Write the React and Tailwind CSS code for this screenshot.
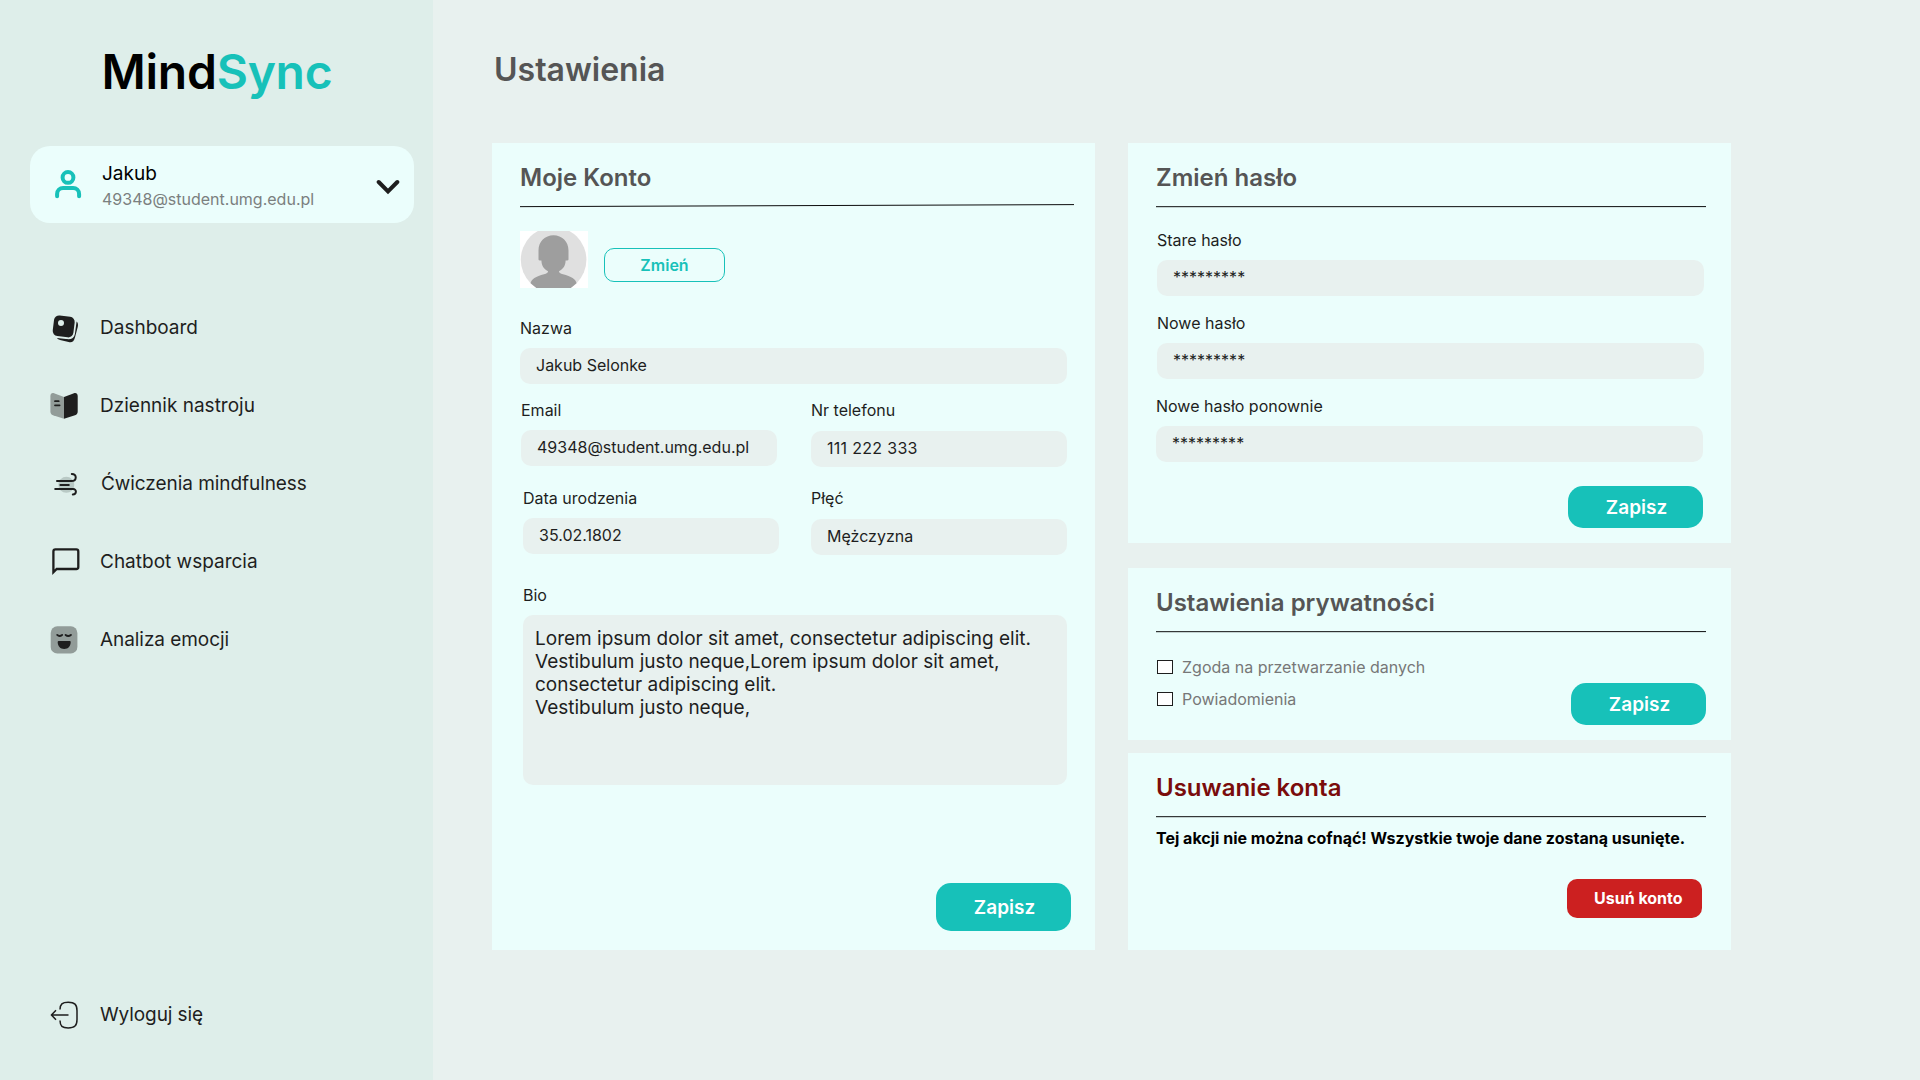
const INK = "#1e1e1e";
const MUTED = "#929c99";

function DashboardIcon() {
  return (
    <svg className="block h-[30px] w-[32px]" viewBox="50 313 32 30" fill={INK}>
      <path d="M76.6 320.6C78 321.8 78.3 323.8 77.8 325.7L74.9 336.8C73.9 340.7 71.8 341.9 68.6 341.1L60 338.9C58.6 338.5 57.7 338.1 57 337L66 338.1C71.4 338.8 74.2 337 74.9 333Z" />
      <rect x="53.3" y="315" width="20.8" height="20.8" rx="5.2" transform="rotate(7 63.7 325.4)" />
      <circle cx="61" cy="322" r="3" fill="#deeeea" />
    </svg>
  );
}

function JournalIcon() {
  return (
    <svg className="block h-[28px] w-[32px]" viewBox="50 392 32 28">
      <path fill={MUTED} d="M64 396.9L54 393.3C52 392.6 50.4 393.8 50.4 396V411.5C50.4 413.5 51.2 414.6 53 415.2L64 418.7Z" />
      <path fill={INK} d="M64 396.9L74 393.3C76 392.6 77.7 393.8 77.7 396V411.5C77.7 413.5 76.9 414.6 75 415.2L64 418.7Z" />
      <path d="M55 401.2H58.7M55 405.3H59.6" stroke={INK} strokeWidth="1.8" strokeLinecap="round" />
    </svg>
  );
}

function WindIcon() {
  return (
    <svg className="block h-[26px] w-[32px]" viewBox="50 470 32 26" fill="none">
      <circle cx="66.3" cy="483.8" r="8" fill="#b9c9c5" />
      <path
        d="M57 480H71.5C77 480 77.2 472.9 71.8 472.9M60.4 484H68.8M55.2 488.1H73C77 488.1 76.8 493.4 72.8 493.4"
        stroke={INK}
        strokeWidth="2"
        strokeLinecap="round"
      />
    </svg>
  );
}

function ChatIcon() {
  return (
    <svg className="block h-[30px] w-[32px]" viewBox="50 547 32 30" fill="none">
      <path
        d="M53.4 572.3V551.4A2 2 0 0 1 55.4 549.4H76.3A2 2 0 0 1 78.3 551.4V567A2 2 0 0 1 76.3 569H56.7Z"
        stroke={INK}
        strokeWidth="2.3"
      />
    </svg>
  );
}

function EmotionIcon() {
  return (
    <svg className="block h-[30px] w-[32px]" viewBox="50 625 32 30" fill="none">
      <rect x="50.7" y="626.3" width="26.7" height="27.2" rx="6.6" fill={MUTED} />
      <path d="M57.2 634.9Q59.4 637 62.1 634.9M65.6 634.9Q68.2 637 70.9 634.9" stroke={INK} strokeWidth="1.9" strokeLinecap="round" />
      <path d="M58.6 641H69.8Q70.7 641 70.7 642C70.7 646.2 68.2 649 64.2 649S57.7 646.2 57.7 642Q57.7 641 58.6 641Z" fill={INK} />
    </svg>
  );
}

function LogoutIcon() {
  return (
    <svg className="block h-[30px] w-[32px]" viewBox="50 1000 32 30" fill="none">
      <path
        d="M60 1009.6C60.1 1004 62.2 1002.3 68.2 1002.3C74.6 1002.3 77 1004.4 77 1010.8V1019.4C77 1025.8 74.6 1027.9 68.2 1027.9C62.2 1027.9 60.1 1026.2 60 1020.6M68.5 1015H51.8M56 1010.3L51.4 1015L56 1019.7"
        stroke={INK}
        strokeWidth="1.5"
        strokeLinejoin="round"
      />
    </svg>
  );
}

function UserIcon() {
  return (
    <svg className="block h-[30px] w-[28px]" viewBox="54 169 28 30" fill="none" stroke="#17c1b9">
      <circle cx="68" cy="177.4" r="5.4" strokeWidth="4" />
      <path d="M57.1 196.2V194A6 6 0 0 1 63.1 188H73.1A6 6 0 0 1 79.1 194V196.2" strokeWidth="4" strokeLinecap="round" />
    </svg>
  );
}

function Avatar() {
  return (
    <svg className="block h-[57px] w-[68px]" viewBox="0 0 68 57">
      <rect width="68" height="57" fill="#fff" />
      <circle cx="33.6" cy="28.8" r="32.8" fill="#e0e0e0" />
      <path
        fill="#9e9e9e"
        d="M33.5 4.2C42 4.2 48.5 10.5 48.5 19.5V28.5Q48.5 29.6 47 29.6H45.6C45.4 35 43.5 37.8 39 40.2Q38.6 42.2 43 43.2C51 45 56.2 48.5 56.5 52.2L50.8 57H16.4L10.6 52.2C11 48.5 16 45 24 43.2Q28.4 42.2 28 40.2C23.5 37.8 21.7 35 21.4 29.6H20Q18.5 29.6 18.5 28.5V19.5C18.5 10.5 25 4.2 33.5 4.2Z"
      />
    </svg>
  );
}

function Rule({ width, from, to, className }) {
  return (
    <svg className={`block h-[6px] ${className}`} viewBox={`0 0 ${width} 6`}>
      <line x1="0" y1={from} x2={width} y2={to} stroke="#0c0c0c" strokeWidth="1" />
    </svg>
  );
}

function Heading({ children, className = "text-[#555555]" }) {
  return <h2 className={`text-[24px] leading-[29px] font-semibold ${className}`}>{children}</h2>;
}

function Field({ label, value, className = "" }) {
  return (
    <div className={`flex flex-col text-[16px] leading-[20px] text-[#1e1e1e] ${className}`}>
      <label>{label}</label>
      <div className="mt-[10px] h-[36px] rounded-[10px] bg-[#e8f1ef] px-4 pt-[7px]">{value}</div>
    </div>
  );
}

function SaveButton({ className }) {
  return (
    <button className={`block w-[135px] rounded-[15px] bg-[#17c1b9] pl-[2px] text-center text-[19px] leading-[23px] font-semibold text-white ${className}`}>
      Zapisz
    </button>
  );
}

function Checkbox({ label }) {
  return (
    <label className="flex h-[20px] items-center text-[16px] leading-[20px] text-[#777777]">
      <span className="ml-px h-[14px] w-[16px] border border-[#1e1e1e] bg-white" />
      <span className="ml-[9px]">{label}</span>
    </label>
  );
}

const navItems = [
  { label: "Dashboard", Icon: DashboardIcon, shift: "pt-[2px]" },
  { label: "Dziennik nastroju", Icon: JournalIcon, shift: "pt-px" },
  { label: "Ćwiczenia mindfulness", Icon: WindIcon, text: "pl-px tracking-[-0.06px]" },
  { label: "Chatbot wsparcia", Icon: ChatIcon, shift: "pt-px" },
  { label: "Analiza emocji", Icon: EmotionIcon, shift: "pt-px", text: "tracking-[-0.06px]" },
];

function NavRow({ label, Icon, shift = "", text = "" }) {
  return (
    <a className="flex h-[23px] items-center text-[19px] leading-[23px] text-[#1e1e1e]">
      <span className={`w-[50px] ${shift}`}>
        <Icon />
      </span>
      <span className={text}>{label}</span>
    </a>
  );
}

export default function App() {
  return (
    <div className="flex h-[1080px] w-[1920px] overflow-hidden bg-[#e8f1ef] font-['Inter',sans-serif]">
      <aside className="flex w-[433px] flex-col bg-[#deeeea] pt-[42px] pb-[54px]">
        <div className="ml-[101.5px] text-[48px] leading-[59px] font-semibold tracking-[-0.25px] text-black">
          Mind<span className="text-[#17c1b9]">Sync</span>
        </div>
        <div className="mt-[45px] ml-[30px] flex h-[77px] w-[384px] rounded-[20px] bg-[#ebfefc] pl-6">
          <div className="pt-[23px]">
            <UserIcon />
          </div>
          <div className="ml-5 pt-4">
            <div className="text-[19px] leading-[23px] text-black">Jakub</div>
            <div className="mt-1 text-[16px] leading-[20px] text-[#7b807f]">49348@student.umg.edu.pl</div>
          </div>
          <svg className="mt-[33px] mr-[14px] ml-auto block h-[16px] w-[24px]" viewBox="376 179 24 16" fill="none">
            <path d="M378.7 182L388 191.4L397.3 182" stroke={INK} strokeWidth="4" strokeLinecap="round" />
          </svg>
        </div>
        <nav className="mt-[93px] ml-[50px] flex flex-col gap-[55px]">
          {navItems.map((item) => (
            <NavRow key={item.label} {...item} />
          ))}
        </nav>
        <div className="mt-auto ml-[50px]">
          <NavRow label="Wyloguj się" Icon={LogoutIcon} shift="pt-px" text="tracking-[-0.1px]" />
        </div>
      </aside>

      <main className="pt-[50px] pl-[59px]">
        <h1 className="ml-[2px] text-[32px] leading-[39px] font-semibold text-[#555555]">Ustawienia</h1>
        <div className="mt-[54px] flex gap-[33px]">
          <section className="h-[807px] w-[603px] bg-[#ebfefc] pt-5 pl-7">
            <Heading>Moje Konto</Heading>
            <Rule width={554} from={3.65} to={1.6} className="mt-[11px] w-[554px]" />
            <div className="mt-[22px] flex">
              <Avatar />
              <button className="mt-[17px] ml-4 h-[34px] w-[121px] rounded-[10px] border border-[#17c1b9] text-center text-[16px] leading-[20px] font-semibold text-[#17c1b9]">
                Zmień
              </button>
            </div>
            <Field label="Nazwa" value="Jakub Selonke" className="mt-[30px] w-[547px]" />
            <div className="flex w-[547px] justify-between">
              <div>
                <Field label="Email" value="49348@student.umg.edu.pl" className="mt-4 ml-px w-[256px]" />
                <Field label="Data urodzenia" value="35.02.1802" className="mt-[22px] ml-[3px] w-[256px]" />
              </div>
              <div>
                <Field
                  label="Nr telefonu"
                  value={<span className="tracking-[0.3px]">111 222 333</span>}
                  className="mt-4 w-[256px] [&>div]:mt-[11px]"
                />
                <Field label="Płęć" value="Mężczyzna" className="mt-[21px] w-[256px] [&>div]:mt-[11px]" />
              </div>
            </div>
            <div className="mt-[30px] ml-[3px] text-[#1e1e1e]">
              <label className="block text-[16px] leading-[20px]">Bio</label>
              <p className="mt-[10px] h-[170px] w-[544px] rounded-[10px] bg-[#e8f1ef] pt-[12px] pl-[12px] text-[19px] leading-[23px]">
                Lorem ipsum dolor sit amet, consectetur adipiscing elit.
                <br />
                Vestibulum justo neque,Lorem ipsum dolor sit amet,
                <br />
                consectetur adipiscing elit.
                <br />
                Vestibulum justo neque,
              </p>
            </div>
            <SaveButton className="mt-[98px] ml-[416px] h-[48px]" />
          </section>

          <div className="flex flex-col">
            <section className="h-[400px] w-[603px] bg-[#ebfefc] pt-5 pl-7">
              <Heading>Zmień hasło</Heading>
              <Rule width={550} from={3.7} to={3.6} className="mt-[11px] w-[550px]" />
              <Field label="Stare hasło" value="*********" className="mt-[21px] ml-px w-[547px]" />
              <Field label="Nowe hasło" value="*********" className="mt-[17px] ml-px w-[547px]" />
              <Field label="Nowe hasło ponownie" value="*********" className="mt-[17px] w-[547px]" />
              <SaveButton className="mt-6 ml-[412px] h-[42px]" />
            </section>

            <section className="mt-[25px] h-[172px] w-[603px] bg-[#ebfefc] pt-5 pl-7">
              <Heading>Ustawienia prywatności</Heading>
              <Rule width={550} from={3.7} to={3.6} className="mt-[11px] w-[550px]" />
              <div className="flex w-[550px] justify-between">
                <div className="flex flex-col gap-3 pt-[23px]">
                  <Checkbox label="Zgoda na przetwarzanie danych" />
                  <Checkbox label="Powiadomienia" />
                </div>
                <SaveButton className="mt-[49px] h-[42px]" />
              </div>
            </section>

            <section className="mt-[13px] h-[197px] w-[603px] bg-[#ebfefc] pt-5 pl-7">
              <Heading className="text-[#7a0c0c]">Usuwanie konta</Heading>
              <Rule width={550} from={3.7} to={3.6} className="mt-[11px] w-[550px]" />
              <p className="mt-[9px] text-[16px] leading-[20px] font-bold text-black">
                Tej akcji nie można cofnąć! Wszystkie twoje dane zostaną usunięte.
              </p>
              <button className="mt-[31px] ml-[411px] block h-[39px] w-[135px] rounded-[10px] bg-[#cc2020] pb-px pl-[27px] text-left text-[16px] leading-[20px] font-bold text-white">
                Usuń konto
              </button>
            </section>
          </div>
        </div>
      </main>
    </div>
  );
}
